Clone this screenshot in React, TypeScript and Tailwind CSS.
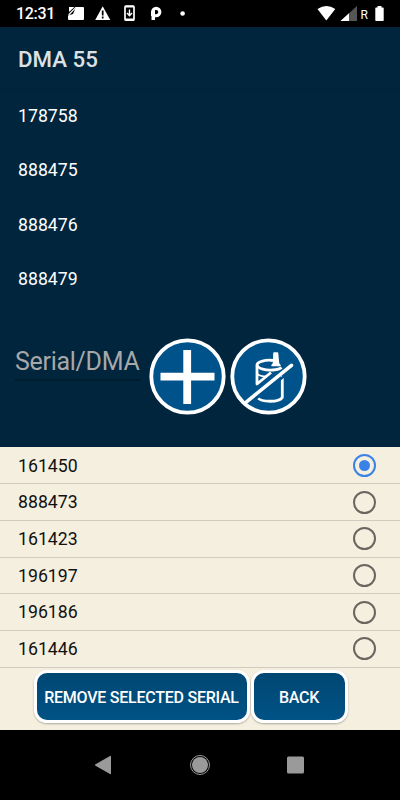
import { useState } from 'react';

const ASSIGNED_SERIALS = ['178758', '888475', '888476', '888479'];
const AVAILABLE_SERIALS = ['161450', '888473', '161423', '196197', '196186', '161446'];

const StatusBar = () => (
  <header className="flex h-[27px] shrink-0 items-center bg-black text-white">
    <span className="w-[67px] pl-4 text-[16px] font-medium leading-[28px] tracking-[-0.3px]">12:31</span>
    <svg width="120" height="27" viewBox="67 0 120 27" fill="currentColor">
      <path d="M76 7h7a1 1 0 0 1 1 1v11a1 1 0 0 1-1 1H69a1 1 0 0 1-1-1v-3.500l5-1.500z" />
      <path d="M69 7h5.500L69 12zM68 14.500L75.500 7h1.500L69.500 15z" />
      <path d="M102.700 6.200L110.300 20H95.200z" />
      <path d="M102.700 10.500v5M102.700 16.500v2" stroke="#000" strokeWidth="1.7" />
      <rect x="125" y="6" width="9" height="14.200" rx="1" fill="none" stroke="currentColor" strokeWidth="1.700" />
      <path d="M125 6.700h9M125 19.500h9" stroke="currentColor" strokeWidth="1.800" />
      <path d="M129.500 9.500v6M127 13l2.500 2.800L132 13" fill="none" stroke="currentColor" strokeWidth="1.400" />
      <path fillRule="evenodd" d="M151 12a5.200 5.200 0 1 1 5.200 5.200h-1.200v2.800h-3.500v-4H151zM155 10v4.200h1.200a2.100 2.100 0 1 0 0-4.200z" />
      <circle cx="182.600" cy="13.500" r="2.300" />
    </svg>
    <svg className="ml-auto" width="88" height="27" viewBox="312 0 88 27" fill="currentColor">
      <path d="M317.500 9q9-6 17.800 0L326.300 20.400z" />
      <path d="M357 6v15h-16.500z" fill="#555" />
      <path d="M349 13.300V21h-8.500z" />
      <text x="360.500" y="18.500" fontSize="12" className="font-['Roboto']">R</text>
      <path d="M377.500 6h4v1.500h1.500a.7.7 0 0 1 .7.7v12a.7.7 0 0 1-.7.700h-7a.7.7 0 0 1-.7-.7v-12a.7.7 0 0 1 .7-.7h1.500z" />
    </svg>
  </header>
);

const AddIcon = () => (
  <svg width="77" height="77" viewBox="0 0 77 77">
    <circle cx="38.500" cy="38.500" r="36.200" fill="#00538a" stroke="#fff" strokeWidth="3.800" />
    <path d="M38.200 12v54M11.500 38.700h54" stroke="#fff" strokeWidth="7.800" />
  </svg>
);

const NoDeviceIcon = () => (
  <svg width="77" height="77" viewBox="0 0 77 77" fill="none" stroke="#fff">
    <circle cx="38.500" cy="38.500" r="36.200" fill="#00538a" strokeWidth="3.800" />
    <g strokeWidth="2.800" strokeLinejoin="round">
      <path d="M43 22.500c-7-1-16 1-16 4.500V46L41 34.500" />
      <path d="M27 27c1 4 9 5.500 16 5 4-.3 7-1 8.500-2.500" />
      <path d="M27 35.500c2 2.500 6 3 10 3" strokeWidth="2" />
      <path d="M52.300 38v21.500c-3 5-21 5-25 0" />
    </g>
    <path d="M44 15h3.500l1 10.500 1.500 2h-8l1.500-2z" fill="#fff" strokeWidth="1.500" strokeLinejoin="round" />
    <path d="M19 66L65 29.500" stroke="#00538a" strokeWidth="2.500" />
    <path d="M16.500 63.800L61.500 27.300" strokeWidth="3.600" strokeLinecap="round" />
  </svg>
);

const NavigationBar = () => (
  <nav className="flex h-[70px] shrink-0 bg-black">
    <svg width="400" height="70" viewBox="0 730 400 70" fill="#9a9a9a">
      <path d="M95.500 764.300L110 756q1-.5 1 .5v17q0 1-1 .5L95.500 765.700q-1-.7 0-1.400z" />
      <circle cx="200" cy="765" r="8" />
      <circle cx="200" cy="765" r="9.500" fill="none" stroke="#9a9a9a" strokeWidth="1" />
      <rect x="287" y="756.500" width="17" height="17" rx="1.500" />
    </svg>
  </nav>
);

export default function App() {
  const [selected, setSelected] = useState(AVAILABLE_SERIALS[0]);
  const [serial, setSerial] = useState('');

  return (
    <div className="flex h-[800px] w-[400px] flex-col overflow-hidden bg-[#f5efdf] font-['Roboto',sans-serif]">
      <StatusBar />

      <section className="flex h-[420px] shrink-0 flex-col bg-[#00253d] text-white">
        <h1 className="h-[63px] border-b border-[#002137] pl-[18px] text-[22.3px] font-medium leading-[65px] text-[#dde1e3]">
          DMA 55
        </h1>
        <ul>
          {ASSIGNED_SERIALS.map((item) => (
            <li key={item} className="h-[54.4px] pl-[18px] text-[17.7px] leading-[53px]">
              {item}
            </li>
          ))}
        </ul>
        <div className="flex pl-[15px] pt-[30.4px]">
          <input
            value={serial}
            onChange={(event) => setSerial(event.target.value)}
            placeholder="Serial/DMA"
            className="mr-[9px] h-[43px] w-[125px] border-b-2 border-[#001c2f] pt-[6px] text-[25px] tracking-[-0.3px] outline-none placeholder:text-[#a8a8a8]"
          />
          <div className="flex gap-[4px]">
            <button type="button" aria-label="Add serial">
              <AddIcon />
            </button>
            <button type="button" aria-label="Unassign device">
              <NoDeviceIcon />
            </button>
          </div>
        </div>
      </section>

      <ul className="h-[221px] shrink-0 pt-[0.6px]">
        {AVAILABLE_SERIALS.map((item) => (
          <li key={item} className="h-[36.7px] border-b border-[#d0cbbe]">
            <button
              type="button"
              onClick={() => setSelected(item)}
              className="flex h-full w-full items-center justify-between pl-[18px] pr-6 text-[17.7px] text-[#111]"
            >
              <span className="pt-px">{item}</span>
              <span
                className={
                  selected === item
                    ? 'flex size-[23px] items-center justify-center rounded-full border-2 border-[#3b82e6]'
                    : 'size-[23px] rounded-full border-2 border-[#68665f]'
                }
              >
                {selected === item && <span className="size-[11px] rounded-full bg-[#3b82e6]" />}
              </span>
            </button>
          </li>
        ))}
      </ul>

      <div className="flex h-[62px] shrink-0 gap-px pl-[33.5px] pt-[2px] text-[16px] font-medium tracking-[-0.24px] text-white">
        <button
          type="button"
          className="h-[53px] w-[216px] whitespace-nowrap rounded-[13px] border-[3.5px] border-white bg-linear-to-b from-[#004773] to-[#005285] pt-[3px] shadow-[0_1px_2px_rgba(0,0,0,0.3)]"
        >
          REMOVE SELECTED SERIAL
        </button>
        <button
          type="button"
          className="h-[53px] w-[97px] rounded-[13px] border-[3.5px] border-white bg-linear-to-b from-[#004773] to-[#005285] pt-[3px] shadow-[0_1px_2px_rgba(0,0,0,0.3)]"
        >
          BACK
        </button>
      </div>

      <NavigationBar />
    </div>
  );
}
